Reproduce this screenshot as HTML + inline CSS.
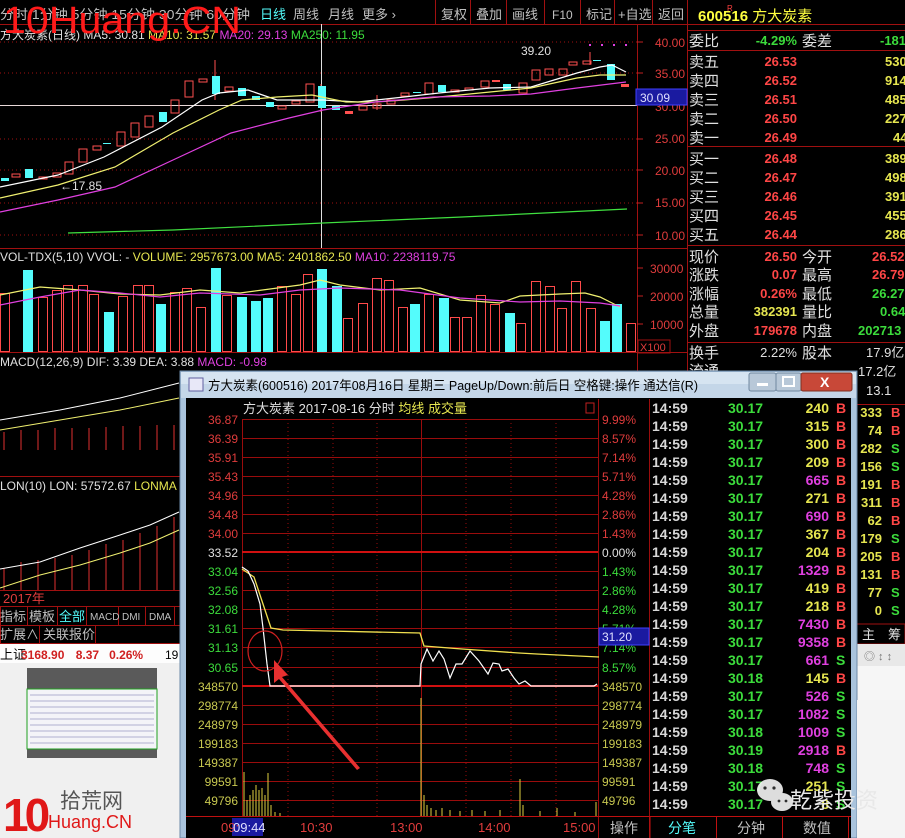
<!DOCTYPE html>
<html><head><meta charset="utf-8">
<style>
html,body{margin:0;padding:0;background:#000;width:905px;height:838px;overflow:hidden}
svg{display:block}
text{font-family:"Liberation Sans","Noto Sans CJK SC",sans-serif}
.r{fill:#ff4646}.g{fill:#3cdc3c}.y{fill:#e6e650}.w{fill:#e0e0e0}.c{fill:#54fcfc}.m{fill:#e040e0}.gr{fill:#c0c0c0}
</style></head><body>
<svg width="905" height="838" viewBox="0 0 905 838" font-size="12" xmlns="http://www.w3.org/2000/svg">
<rect width="905" height="838" fill="#000"/>
<!-- toolbar -->
<line x1="0" y1="24.5" x2="905" y2="24.5" stroke="#a01010"/>
<text x="0" y="19" class="gr" font-size="13" textLength="250" lengthAdjust="spacingAndGlyphs">分时 1分钟 5分钟 15分钟 30分钟 60分钟</text>
<text x="260" y="19" class="c" font-size="13">日线</text>
<text x="293" y="19" class="gr" font-size="13">周线</text>
<text x="328" y="19" class="gr" font-size="13">月线</text>
<text x="362" y="19" class="gr" font-size="13">更多 ›</text>
<text x="441" y="19" class="gr" font-size="13">复权</text>
<text x="476" y="19" class="gr" font-size="13">叠加</text>
<text x="512" y="19" class="gr" font-size="13">画线</text>
<text x="552" y="19" class="gr" font-size="12">F10</text>
<text x="586" y="19" class="gr" font-size="13">标记</text>
<text x="618" y="19" class="gr" font-size="13">+自选</text>
<text x="658" y="19" class="gr" font-size="13">返回</text>
<g stroke="#a01010"><line x1="435.5" y1="0" x2="435.5" y2="24"/><line x1="470.5" y1="0" x2="470.5" y2="24"/><line x1="506.5" y1="0" x2="506.5" y2="24"/><line x1="544.5" y1="0" x2="544.5" y2="24"/><line x1="580.5" y1="0" x2="580.5" y2="24"/><line x1="614.5" y1="0" x2="614.5" y2="24"/><line x1="652.5" y1="0" x2="652.5" y2="24"/><line x1="687.5" y1="0" x2="687.5" y2="838"/><line x1="637.5" y1="24" x2="637.5" y2="372"/></g>
<text x="0" y="39" font-size="12"><tspan class="w">方大炭素(日线) MA5: 30.81 </tspan><tspan class="y">MA10: 31.57 </tspan><tspan class="m"> MA20: 29.13 </tspan><tspan class="g"> MA250: 11.95</tspan></text>
<!-- price axis -->
<g font-size="12" fill="#e03c3c">
<text x="655" y="47">40.00</text><text x="655" y="78">35.00</text><text x="655" y="111">30.00</text><text x="655" y="143">25.00</text><text x="655" y="175">20.00</text><text x="655" y="207">15.00</text><text x="655" y="240">10.00</text></g>
<g stroke="#a01010" stroke-dasharray="1 3"><line x1="0" y1="42" x2="637" y2="42"/><line x1="0" y1="73" x2="637" y2="73"/><line x1="0" y1="139" x2="637" y2="139"/><line x1="0" y1="170" x2="637" y2="170"/><line x1="0" y1="203" x2="637" y2="203"/><line x1="0" y1="235" x2="637" y2="235"/></g>
<g stroke="#c02020"><line x1="637" y1="42" x2="643" y2="42"/><line x1="637" y1="73" x2="643" y2="73"/><line x1="637" y1="139" x2="643" y2="139"/><line x1="637" y1="170" x2="643" y2="170"/><line x1="637" y1="203" x2="643" y2="203"/><line x1="637" y1="235" x2="643" y2="235"/></g>
<line x1="0" y1="105.5" x2="637" y2="105.5" stroke="#e8d8d8"/>
<line x1="321.5" y1="24" x2="321.5" y2="248" stroke="#e0e0e0"/>
<rect x="636" y="89" width="51" height="16" fill="#1a1aa0" stroke="#4040ff"/>
<text x="640" y="102" fill="#e0e0ff" font-size="12">30.09</text>
<!-- candles -->
<g stroke="#ff5050" fill="none" stroke-width="1">
<rect x="12" y="174" width="8" height="3"/><rect x="39" y="177" width="8" height="2"/><rect x="53" y="173" width="8" height="4"/><rect x="65" y="162" width="8" height="12"/><rect x="79" y="149" width="8" height="13"/><rect x="93" y="146" width="8" height="4"/><rect x="117" y="132" width="8" height="14"/><rect x="131" y="123" width="8" height="14"/><rect x="145" y="116" width="8" height="11"/><rect x="171" y="100" width="8" height="13"/><rect x="185" y="81" width="8" height="16"/><rect x="199" y="79" width="8" height="3"/><rect x="225" y="87" width="8" height="4"/><rect x="278" y="106" width="8" height="3"/><rect x="292" y="101" width="8" height="3"/><rect x="306" y="84" width="8" height="18"/><rect x="359" y="106" width="8" height="4"/><rect x="373" y="104" width="8" height="4"/><rect x="387" y="100" width="8" height="4"/><rect x="401" y="93" width="8" height="3"/><rect x="425" y="83" width="8" height="11"/><rect x="451" y="90" width="8" height="2"/><rect x="465" y="88" width="8" height="2"/><rect x="481" y="81" width="8" height="6"/><rect x="519" y="83" width="8" height="10"/><rect x="532" y="70" width="8" height="10"/><rect x="545" y="69" width="8" height="6"/><rect x="559" y="69" width="8" height="6"/><rect x="569" y="62" width="8" height="3"/><rect x="583" y="61" width="8" height="3"/>
<line x1="215" y1="60" x2="215" y2="100"/><line x1="321" y1="84" x2="321" y2="112"/><line x1="377" y1="95" x2="377" y2="110"/><line x1="590" y1="52" x2="590" y2="65"/>
</g>
<g fill="#ff5050"><rect x="345" y="111" width="8" height="3"/><rect x="492" y="80" width="8" height="2"/><rect x="621" y="84" width="8" height="3"/></g>
<g fill="#54fcfc"><rect x="1" y="178" width="8" height="3"/><rect x="25" y="169" width="8" height="9"/><rect x="159" y="112" width="8" height="10"/><rect x="212" y="76" width="8" height="18"/><rect x="238" y="88" width="8" height="8"/><rect x="252" y="96" width="8" height="4"/><rect x="266" y="102" width="8" height="5"/><rect x="318" y="86" width="8" height="22"/><rect x="332" y="106" width="8" height="4"/><rect x="438" y="85" width="8" height="7"/><rect x="503" y="84" width="8" height="6"/><rect x="607" y="64" width="8" height="16"/>
<rect x="103" y="143" width="8" height="1"/><rect x="413" y="92" width="8" height="1"/><rect x="593" y="60" width="8" height="1"/></g>
<g fill="none" stroke-width="1.2">
<polyline stroke="#ffffff" points="0,187 58,175 104,157 162,127 202,100 219,93 248,90 277,100 323,100 358,102 404,97 439,93 490,88 531,87 554,80 577,73 600,67 612,65 626,72"/>
<polyline stroke="#f0f070" points="0,198 58,185 115,167 173,133 219,110 242,100 277,97 312,95 346,102 375,102 404,100 439,97 490,92 531,88 554,83 577,78 600,75 626,75"/>
<polyline stroke="#e040e0" points="0,212 58,200 115,187 173,160 231,133 289,118 323,110 375,102 433,97 490,96 531,94 577,88 626,82"/>
<polyline stroke="#40e040" points="68,233 173,230 323,223 462,217 627,209"/>
</g>
<text x="521" y="55" class="w" font-size="12">39.20</text><text x="60" y="190" class="w" font-size="12">←17.85</text>
<g fill="#e040e0"><rect x="589" y="44" width="2" height="2"/><rect x="601" y="44" width="2" height="2"/><rect x="613" y="44" width="2" height="2"/><rect x="625" y="44" width="2" height="2"/></g>
<!-- right panel top -->
<text x="698" y="21" font-size="15" fill="#ffff40"><tspan font-weight="bold">600516</tspan> 方大炭素</text>
<text x="727" y="11" font-size="8" fill="#ff4040">R</text>
<g stroke="#a01010"><line x1="688" y1="30.5" x2="905" y2="30.5"/><line x1="688" y1="50.5" x2="905" y2="50.5"/><line x1="688" y1="146.5" x2="905" y2="146.5"/><line x1="688" y1="245.5" x2="905" y2="245.5"/><line x1="688" y1="342.5" x2="905" y2="342.5"/></g>
<g font-size="15" class="w">
<text x="689" y="46">委比</text><text x="802" y="46">委差</text>
<text x="689" y="67">卖五</text><text x="689" y="86">卖四</text><text x="689" y="105">卖三</text><text x="689" y="124">卖二</text><text x="689" y="143">卖一</text>
<text x="689" y="164">买一</text><text x="689" y="183">买二</text><text x="689" y="202">买三</text><text x="689" y="221">买四</text><text x="689" y="240">买五</text>
</g>
<g font-size="13" text-anchor="end" font-weight="bold">
<text x="797" y="45" class="g">-4.29%</text>
<text x="797" y="66" class="r">26.53</text><text x="797" y="85" class="r">26.52</text><text x="797" y="104" class="r">26.51</text><text x="797" y="123" class="r">26.50</text><text x="797" y="142" class="r">26.49</text>
<text x="797" y="163" class="r">26.48</text><text x="797" y="182" class="r">26.47</text><text x="797" y="201" class="r">26.46</text><text x="797" y="220" class="r">26.45</text><text x="797" y="239" class="r">26.44</text>
</g>
<text x="880" y="45" class="g" font-size="13" font-weight="bold">-181</text>
<g font-size="13" class="y" font-weight="bold">
<text x="885" y="66">530</text><text x="885" y="85">914</text><text x="885" y="104">485</text><text x="885" y="123">227</text><text x="893" y="142">44</text>
<text x="885" y="163">389</text><text x="885" y="182">498</text><text x="885" y="201">391</text><text x="885" y="220">455</text><text x="885" y="239">286</text>
</g>
<g font-size="15" class="w">
<text x="689" y="262">现价</text><text x="802" y="262">今开</text>
<text x="689" y="280">涨跌</text><text x="802" y="280">最高</text>
<text x="689" y="299">涨幅</text><text x="802" y="299">最低</text>
<text x="689" y="317">总量</text><text x="802" y="317">量比</text>
<text x="689" y="336">外盘</text><text x="802" y="336">内盘</text>
<text x="689" y="358">换手</text><text x="802" y="358">股本</text>
<text x="689" y="376">流通</text>
</g>
<g font-size="13" text-anchor="end" font-weight="bold">
<text x="797" y="261" class="r">26.50</text><text x="797" y="279" class="r">0.07</text><text x="797" y="298" class="r">0.26%</text><text x="797" y="316" class="y">382391</text><text x="797" y="335" class="r">179678</text><text x="797" y="357" class="w" font-weight="normal">2.22%</text>
</g>
<g font-size="13" font-weight="bold">
<text x="872" y="261" class="r">26.52</text><text x="872" y="279" class="r">26.79</text><text x="872" y="298" class="g">26.27</text><text x="880" y="316" class="g">0.64</text><text x="858" y="335" class="g">202713</text><text x="866" y="357" class="w" font-weight="normal">17.9亿</text><text x="858" y="376" class="w" font-weight="normal">17.2亿</text><text x="866" y="395" class="w" font-weight="normal">13.1</text>
</g>
<!-- volume panel -->
<line x1="0" y1="248.5" x2="688" y2="248.5" stroke="#a01010"/>
<text x="0" y="261" font-size="12"><tspan class="w">VOL-TDX(5,10) VVOL: - </tspan><tspan class="y"> VOLUME: 2957673.00 MA5: 2401862.50 </tspan><tspan class="m"> MA10: 2238119.75</tspan></text>
<g font-size="12" fill="#e03c3c"><text x="650" y="273">30000</text><text x="650" y="301">20000</text><text x="650" y="329">10000</text></g>
<rect x="638" y="340" width="32" height="13" fill="none" stroke="#a01010"/><text x="640" y="351" font-size="11" fill="#e03c3c">X100</text>
<g stroke="#c02020"><line x1="637" y1="268" x2="643" y2="268"/><line x1="637" y1="296" x2="643" y2="296"/><line x1="637" y1="324" x2="643" y2="324"/></g>
<g stroke="#ff4a4a" fill="none">
<rect x="0.5" y="293.5" width="9" height="58"/><rect x="38.5" y="297.5" width="9" height="54"/><rect x="52.5" y="290.5" width="9" height="61"/><rect x="63.5" y="285.5" width="9" height="66"/><rect x="78.5" y="285.5" width="9" height="66"/><rect x="89.5" y="294.5" width="9" height="57"/><rect x="118.5" y="296.5" width="9" height="55"/><rect x="133.5" y="285.5" width="9" height="66"/><rect x="144.5" y="285.5" width="9" height="66"/><rect x="170.5" y="292.5" width="9" height="59"/><rect x="182.5" y="288.5" width="9" height="63"/><rect x="196.5" y="307.5" width="9" height="44"/><rect x="222.5" y="295.5" width="9" height="56"/><rect x="277.5" y="286.5" width="9" height="65"/><rect x="291.5" y="294.5" width="9" height="57"/><rect x="303.5" y="274.5" width="9" height="77"/><rect x="343.5" y="318.5" width="9" height="33"/><rect x="358.5" y="303.5" width="9" height="48"/><rect x="372.5" y="278.5" width="9" height="73"/><rect x="384.5" y="280.5" width="9" height="71"/><rect x="398.5" y="307.5" width="9" height="44"/><rect x="424.5" y="294.5" width="9" height="57"/><rect x="450.5" y="317.5" width="9" height="34"/><rect x="462.5" y="317.5" width="9" height="34"/><rect x="476.5" y="295.5" width="9" height="56"/><rect x="490.5" y="304.5" width="9" height="47"/><rect x="516.5" y="323.5" width="9" height="28"/><rect x="531.5" y="281.5" width="9" height="70"/><rect x="545.5" y="286.5" width="9" height="65"/><rect x="557.5" y="308.5" width="9" height="43"/><rect x="571.5" y="281.5" width="9" height="70"/><rect x="586.5" y="308.5" width="9" height="43"/><rect x="626.5" y="323.5" width="9" height="28"/>
</g>
<g fill="#54fcfc"><rect x="23" y="270" width="10" height="82"/><rect x="104" y="312" width="10" height="40"/><rect x="156" y="304" width="10" height="48"/><rect x="211" y="268" width="10" height="84"/><rect x="237" y="297" width="10" height="55"/><rect x="251" y="301" width="10" height="51"/><rect x="263" y="298" width="10" height="54"/><rect x="317" y="269" width="10" height="83"/><rect x="332" y="286" width="10" height="66"/><rect x="410" y="304" width="10" height="48"/><rect x="439" y="298" width="10" height="54"/><rect x="505" y="313" width="10" height="39"/><rect x="600" y="321" width="10" height="31"/><rect x="612" y="304" width="10" height="48"/></g>
<g fill="none" stroke-width="1.2">
<polyline stroke="#f0f070" points="0,295 40,287 80,290 120,294 160,295 200,290 240,293 300,285 320,280 340,285 380,290 420,288 460,300 500,303 520,296 560,294 585,293 600,297 620,307"/>
<polyline stroke="#e040e0" points="0,305 40,297 80,290 120,293 160,297 200,293 260,295 300,290 340,288 400,290 460,298 520,302 560,301 600,303 620,306"/>
</g>
<line x1="0" y1="352.5" x2="688" y2="352.5" stroke="#a01010"/>
<text x="0" y="366" font-size="12"><tspan class="w">MACD(12,26,9) DIF: 3.39 DEA: 3.88 </tspan><tspan class="m"> MACD: -0.98</tspan></text>
<!-- macd / lon remnants left -->
<g stroke="#e03030"><line x1="4" y1="432" x2="4" y2="450"/><line x1="21" y1="430" x2="21" y2="450"/><line x1="38" y1="430" x2="38" y2="450"/><line x1="55" y1="428" x2="55" y2="450"/><line x1="72" y1="428" x2="72" y2="450"/><line x1="89" y1="428" x2="89" y2="450"/><line x1="106" y1="427" x2="106" y2="450"/><line x1="123" y1="426" x2="123" y2="450"/><line x1="140" y1="426" x2="140" y2="450"/><line x1="157" y1="425" x2="157" y2="450"/><line x1="174" y1="425" x2="174" y2="450"/>
<line x1="4" y1="568" x2="4" y2="590"/><line x1="21" y1="562" x2="21" y2="590"/><line x1="38" y1="560" x2="38" y2="590"/><line x1="55" y1="558" x2="55" y2="590"/><line x1="72" y1="555" x2="72" y2="590"/><line x1="89" y1="550" x2="89" y2="590"/><line x1="106" y1="544" x2="106" y2="590"/><line x1="123" y1="540" x2="123" y2="590"/><line x1="140" y1="533" x2="140" y2="590"/><line x1="157" y1="526" x2="157" y2="590"/><line x1="174" y1="517" x2="174" y2="590"/></g>
<polyline fill="none" stroke="#fff" points="0,420 60,410 120,398 179,383"/>
<polyline fill="none" stroke="#f0f070" points="0,430 60,420 120,410 179,398"/>
<line x1="0" y1="476.5" x2="181" y2="476.5" stroke="#a01010"/>
<text x="0" y="490" font-size="12"><tspan class="w">LON(10) LON: 57572.67 </tspan><tspan class="y">LONMA</tspan></text>
<polyline fill="none" stroke="#fff" points="0,569 40,562 80,548 120,535 150,525 179,512"/>
<polyline fill="none" stroke="#f0f070" points="0,588 40,575 80,565 120,553 150,543 179,530"/>
<line x1="0" y1="590.5" x2="181" y2="590.5" stroke="#a01010"/>
<text x="3" y="603" font-size="13" fill="#e03c3c">2017年</text>
<g stroke="#a01010" fill="none"><rect x="0.5" y="606.5" width="181" height="19"/><rect x="0.5" y="625.5" width="181" height="18"/>
<line x1="27.5" y1="606" x2="27.5" y2="626"/><line x1="57.5" y1="606" x2="57.5" y2="626"/><line x1="86.5" y1="606" x2="86.5" y2="626"/><line x1="118.5" y1="606" x2="118.5" y2="626"/><line x1="145.5" y1="606" x2="145.5" y2="626"/><line x1="174.5" y1="606" x2="174.5" y2="626"/><line x1="39.5" y1="626" x2="39.5" y2="644"/><line x1="95.5" y1="626" x2="95.5" y2="644"/></g>
<text x="0" y="621" font-size="13" class="gr">指标</text><text x="29" y="621" font-size="13" class="gr">模板</text><text x="59" y="621" font-size="13" class="c">全部</text>
<text x="90" y="620" font-size="10" class="gr">MACD</text><text x="122" y="620" font-size="10" class="gr">DMI</text><text x="149" y="620" font-size="10" class="gr">DMA</text>
<text x="0" y="639" font-size="13" class="gr">扩展∧</text><text x="43" y="639" font-size="13" class="gr">关联报价</text>
<rect x="0" y="644" width="181" height="19" fill="#fdfdfd"/>
<text x="0" y="659" font-size="13" fill="#000">上证</text><text x="21" y="659" font-size="12" font-weight="bold" fill="#d02020">3168.90 <tspan dx="8">8.37</tspan><tspan dx="10">0.26%</tspan></text><text x="165" y="659" font-size="12" fill="#000">19</text>
<rect x="0" y="663" width="181" height="175" fill="#f0f0f0"/>
<rect x="27" y="668" width="130" height="90" fill="#5a5a5a"/>
<rect x="27" y="689" width="130" height="60" fill="#f4f4f8" stroke="#20a020"/>
<g stroke="#b0b0d0"><line x1="30" y1="695" x2="154" y2="695"/><line x1="30" y1="701" x2="154" y2="701"/><line x1="30" y1="707" x2="154" y2="707"/><line x1="30" y1="713" x2="154" y2="713"/><line x1="30" y1="719" x2="154" y2="719"/><line x1="30" y1="725" x2="154" y2="725"/><line x1="30" y1="731" x2="154" y2="731"/><line x1="30" y1="737" x2="154" y2="737"/><line x1="30" y1="743" x2="154" y2="743"/></g>
<text x="3" y="831" font-size="46" font-weight="bold" fill="#e01818" letter-spacing="-4">10</text>
<text x="60" y="808" font-size="21" fill="#555">拾荒网</text>
<text x="48" y="828" font-size="18" fill="#e01818">Huang.CN</text>
<!-- right strip under popup -->
<g font-size="13" font-weight="bold" text-anchor="end">
<text x="882" y="417" class="y">333</text><text x="882" y="435" class="y">74</text><text x="882" y="453" class="y">282</text><text x="882" y="471" class="y">156</text><text x="882" y="489" class="y">191</text><text x="882" y="507" class="y">311</text><text x="882" y="525" class="y">62</text><text x="882" y="543" class="y">179</text><text x="882" y="561" class="y">205</text><text x="882" y="579" class="y">131</text><text x="882" y="597" class="y">77</text><text x="882" y="615" class="y">0</text>
</g>
<g font-size="13" font-weight="bold"><text x="891" y="417" class="r">B</text><text x="891" y="435" class="r">B</text><text x="891" y="453" class="g">S</text><text x="891" y="471" class="g">S</text><text x="891" y="489" class="r">B</text><text x="891" y="507" class="r">B</text><text x="891" y="525" class="r">B</text><text x="891" y="543" class="g">S</text><text x="891" y="561" class="r">B</text><text x="891" y="579" class="r">B</text><text x="891" y="597" class="g">S</text><text x="891" y="615" class="g">S</text></g>
<line x1="853" y1="404.5" x2="905" y2="404.5" stroke="#a01010"/>
<rect x="853" y="624" width="52" height="20" fill="#000" stroke="#a01010"/>
<text x="862" y="639" font-size="13" class="w">主</text><text x="888" y="639" font-size="13" class="w">筹</text>
<rect x="853" y="644" width="52" height="22" fill="#e8e8e8"/>
<text x="864" y="660" font-size="11" fill="#777">◎ ↕ ↕</text>
<rect x="853" y="666" width="52" height="172" fill="#f6f6f6"/>
<!-- popup window -->
<rect x="180" y="371" width="677" height="467" fill="#a9c3dc" stroke="#6d8aa8"/>
<rect x="181" y="372" width="675" height="26" fill="#c4d6e8"/>
<rect x="181" y="372" width="675" height="12" fill="#d6e4f1"/>
<rect x="189" y="378" width="14" height="13" fill="#e8e8f8" stroke="#6060a0"/>
<text x="208" y="390" font-size="13" fill="#000" textLength="490" lengthAdjust="spacingAndGlyphs">方大炭素(600516) 2017年08月16日 星期三 PageUp/Down:前后日 空格键:操作 通达信(R)</text>
<rect x="749" y="373" width="27" height="18" rx="2" fill="#b8c8d8" stroke="#7088a0"/>
<rect x="757" y="383" width="11" height="3" fill="#fff"/>
<rect x="776" y="373" width="25" height="18" rx="2" fill="#b8c8d8" stroke="#7088a0"/>
<rect x="783" y="377" width="11" height="9" fill="none" stroke="#fff" stroke-width="2"/>
<rect x="801" y="373" width="51" height="18" rx="2" fill="#c84838" stroke="#803020"/>
<text x="820" y="387" font-size="14" font-weight="bold" fill="#fff">X</text>
<rect x="186" y="398" width="665" height="440" fill="#000"/>
<!-- popup chart -->
<text x="243" y="413" font-size="13"><tspan class="w">方大炭素  2017-08-16 分时 </tspan><tspan class="y">均线 成交量</tspan></text>
<rect x="586" y="403" width="8" height="10" fill="none" stroke="#c02020"/>
<g stroke="#9a0c0c">
<line x1="242" y1="419.5" x2="598" y2="419.5"/><line x1="242" y1="438.5" x2="598" y2="438.5"/><line x1="242" y1="457.5" x2="598" y2="457.5"/><line x1="242" y1="476.5" x2="598" y2="476.5"/><line x1="242" y1="495.5" x2="598" y2="495.5"/><line x1="242" y1="514.5" x2="598" y2="514.5"/><line x1="242" y1="533.5" x2="598" y2="533.5"/>
<line x1="242" y1="571.5" x2="598" y2="571.5"/><line x1="242" y1="590.5" x2="598" y2="590.5"/><line x1="242" y1="609.5" x2="598" y2="609.5"/><line x1="242" y1="628.5" x2="598" y2="628.5"/><line x1="242" y1="647.5" x2="598" y2="647.5"/><line x1="242" y1="667.5" x2="598" y2="667.5"/>
<line x1="242" y1="705.5" x2="598" y2="705.5"/><line x1="242" y1="724.5" x2="598" y2="724.5"/><line x1="242" y1="743.5" x2="598" y2="743.5"/><line x1="242" y1="762.5" x2="598" y2="762.5"/><line x1="242" y1="781.5" x2="598" y2="781.5"/><line x1="242" y1="800.5" x2="598" y2="800.5"/>
<line x1="242.5" y1="419" x2="242.5" y2="816"/><line x1="421.5" y1="419" x2="421.5" y2="816"/><line x1="598.5" y1="399" x2="598.5" y2="838"/><line x1="649.5" y1="399" x2="649.5" y2="838"/>
</g>
<g stroke="#d01010" stroke-width="2"><line x1="242" y1="552" x2="598" y2="552"/><line x1="242" y1="686" x2="598" y2="686"/></g>
<g stroke="#9a0c0c" stroke-dasharray="1 3"><line x1="288" y1="419" x2="288" y2="816"/><line x1="333" y1="419" x2="333" y2="816"/><line x1="377" y1="419" x2="377" y2="816"/><line x1="466" y1="419" x2="466" y2="816"/><line x1="511" y1="419" x2="511" y2="816"/><line x1="556" y1="419" x2="556" y2="816"/></g>
<g font-size="12" text-anchor="end">
<text x="238" y="424" fill="#e03c3c">36.87</text><text x="238" y="443" fill="#e03c3c">36.39</text><text x="238" y="462" fill="#e03c3c">35.91</text><text x="238" y="481" fill="#e03c3c">35.43</text><text x="238" y="500" fill="#e03c3c">34.96</text><text x="238" y="519" fill="#e03c3c">34.48</text><text x="238" y="538" fill="#e03c3c">34.00</text>
<text x="238" y="557" class="w">33.52</text>
<text x="238" y="576" class="g">33.04</text><text x="238" y="595" class="g">32.56</text><text x="238" y="614" class="g">32.08</text><text x="238" y="633" class="g">31.61</text><text x="238" y="652" class="g">31.13</text><text x="238" y="672" class="g">30.65</text>
<text x="238" y="691" fill="#c8c850">348570</text><text x="238" y="710" fill="#c8c850">298774</text><text x="238" y="729" fill="#c8c850">248979</text><text x="238" y="748" fill="#c8c850">199183</text><text x="238" y="767" fill="#c8c850">149387</text><text x="238" y="786" fill="#c8c850">99591</text><text x="238" y="805" fill="#c8c850">49796</text>
</g>
<g font-size="12">
<text x="602" y="424" fill="#e03c3c">9.99%</text><text x="602" y="443" fill="#e03c3c">8.57%</text><text x="602" y="462" fill="#e03c3c">7.14%</text><text x="602" y="481" fill="#e03c3c">5.71%</text><text x="602" y="500" fill="#e03c3c">4.28%</text><text x="602" y="519" fill="#e03c3c">2.86%</text><text x="602" y="538" fill="#e03c3c">1.43%</text>
<text x="602" y="557" class="w">0.00%</text>
<text x="602" y="576" class="g">1.43%</text><text x="602" y="595" class="g">2.86%</text><text x="602" y="614" class="g">4.28%</text><text x="602" y="633" class="g">5.71%</text><text x="602" y="652" class="g">7.14%</text><text x="602" y="672" class="g">8.57%</text>
<text x="602" y="691" fill="#c8c850">348570</text><text x="602" y="710" fill="#c8c850">298774</text><text x="602" y="729" fill="#c8c850">248979</text><text x="602" y="748" fill="#c8c850">199183</text><text x="602" y="767" fill="#c8c850">149387</text><text x="602" y="786" fill="#c8c850">99591</text><text x="602" y="805" fill="#c8c850">49796</text>
</g>
<rect x="599" y="628" width="50" height="17" fill="#1a1aa0" stroke="#4040ff"/>
<text x="602" y="641" font-size="12" fill="#e0e0ff">31.20</text>
<polyline fill="none" stroke="#f0e050" stroke-width="1.3" points="242,569 254,577 263,604 271,628 283,630 420,633 424,646 462,649 519,653 537,654 599,657"/>
<polyline fill="none" stroke="#fff" stroke-width="1.2" points="242,567 248,571 254,584 260,604 263,628 267,664 270,686 420,686 421,664 427,649 433,661 439,651 444,659 450,678 456,664 462,664 470,651 479,661 488,674 493,663 499,664 502,671 508,669 514,678 519,684 525,681 531,686 594,686 597,684"/>
<g stroke="#e0d040">
<line x1="244" y1="816" x2="244" y2="772"/><line x1="247" y1="816" x2="247" y2="800"/><line x1="250" y1="816" x2="250" y2="795"/><line x1="253" y1="816" x2="253" y2="790"/><line x1="256" y1="816" x2="256" y2="785"/><line x1="259" y1="816" x2="259" y2="790"/><line x1="262" y1="816" x2="262" y2="788"/><line x1="265" y1="816" x2="265" y2="795"/><line x1="268" y1="816" x2="268" y2="773"/><line x1="271" y1="816" x2="271" y2="805"/><line x1="275" y1="816" x2="275" y2="812"/><line x1="280" y1="816" x2="280" y2="813"/>
<line x1="421" y1="816" x2="421" y2="698"/><line x1="424" y1="816" x2="424" y2="795"/><line x1="427" y1="816" x2="427" y2="805"/><line x1="431" y1="816" x2="431" y2="808"/><line x1="436" y1="816" x2="436" y2="810"/><line x1="442" y1="816" x2="442" y2="808"/><line x1="450" y1="816" x2="450" y2="810"/><line x1="460" y1="816" x2="460" y2="811"/><line x1="472" y1="816" x2="472" y2="810"/><line x1="485" y1="816" x2="485" y2="811"/><line x1="500" y1="816" x2="500" y2="810"/><line x1="520" y1="816" x2="520" y2="779"/><line x1="523" y1="816" x2="523" y2="805"/><line x1="540" y1="816" x2="540" y2="811"/><line x1="557" y1="816" x2="557" y2="808"/><line x1="575" y1="816" x2="575" y2="812"/><line x1="596" y1="816" x2="596" y2="802"/>
</g>
<ellipse cx="265" cy="651" rx="17" ry="20" fill="none" stroke="#d02020" stroke-width="1.2"/>
<polygon points="274,660 288,675 282,677 360,768 357,770 279,679 274,683" fill="#e83030"/>
<!-- time axis -->
<line x1="186" y1="816.5" x2="851" y2="816.5" stroke="#c01010"/>
<rect x="232" y="818" width="31" height="18" fill="#1a1aa0"/>
<g font-size="13" fill="#e03c3c"><text x="221" y="832">09:</text><text x="233" y="832" fill="#e0e0ff">09:44</text><text x="300" y="832">10:30</text><text x="390" y="832">13:00</text><text x="478" y="832">14:00</text><text x="563" y="832">15:00</text></g>
<g stroke="#c01010"><line x1="650" y1="817" x2="650" y2="838"/><line x1="716.5" y1="817" x2="716.5" y2="838"/><line x1="782.5" y1="817" x2="782.5" y2="838"/><line x1="848.5" y1="817" x2="848.5" y2="838"/></g>
<text x="610" y="833" font-size="14" class="gr">操作</text><text x="668" y="833" font-size="14" class="c">分笔</text><text x="737" y="833" font-size="14" class="gr">分钟</text><text x="803" y="833" font-size="14" class="gr">数值</text>
<!-- ticks -->
<g font-size="14" font-weight="bold">
<g fill="#d8d8d8">
<text x="652" y="413">14:59</text><text x="652" y="431">14:59</text><text x="652" y="449">14:59</text><text x="652" y="467">14:59</text><text x="652" y="485">14:59</text><text x="652" y="503">14:59</text><text x="652" y="521">14:59</text><text x="652" y="539">14:59</text><text x="652" y="557">14:59</text><text x="652" y="575">14:59</text><text x="652" y="593">14:59</text><text x="652" y="611">14:59</text><text x="652" y="629">14:59</text><text x="652" y="647">14:59</text><text x="652" y="665">14:59</text><text x="652" y="683">14:59</text><text x="652" y="701">14:59</text><text x="652" y="719">14:59</text><text x="652" y="737">14:59</text><text x="652" y="755">14:59</text><text x="652" y="773">14:59</text><text x="652" y="791">14:59</text><text x="652" y="809">14:59</text>
</g>
<g class="g">
<text x="728" y="413">30.17</text><text x="728" y="431">30.17</text><text x="728" y="449">30.17</text><text x="728" y="467">30.17</text><text x="728" y="485">30.17</text><text x="728" y="503">30.17</text><text x="728" y="521">30.17</text><text x="728" y="539">30.17</text><text x="728" y="557">30.17</text><text x="728" y="575">30.17</text><text x="728" y="593">30.17</text><text x="728" y="611">30.17</text><text x="728" y="629">30.17</text><text x="728" y="647">30.17</text><text x="728" y="665">30.17</text><text x="728" y="683">30.18</text><text x="728" y="701">30.17</text><text x="728" y="719">30.17</text><text x="728" y="737">30.18</text><text x="728" y="755">30.19</text><text x="728" y="773">30.18</text><text x="728" y="791">30.17</text><text x="728" y="809">30.17</text>
</g>
<g text-anchor="end">
<text x="829" y="413" class="y">240</text><text x="829" y="431" class="y">315</text><text x="829" y="449" class="y">300</text><text x="829" y="467" class="y">209</text><text x="829" y="485" class="m">665</text><text x="829" y="503" class="y">271</text><text x="829" y="521" class="m">690</text><text x="829" y="539" class="y">367</text><text x="829" y="557" class="y">204</text><text x="829" y="575" class="m">1329</text><text x="829" y="593" class="y">419</text><text x="829" y="611" class="y">218</text><text x="829" y="629" class="m">7430</text><text x="829" y="647" class="m">9358</text><text x="829" y="665" class="m">661</text><text x="829" y="683" class="y">145</text><text x="829" y="701" class="m">526</text><text x="829" y="719" class="m">1082</text><text x="829" y="737" class="m">1009</text><text x="829" y="755" class="m">2918</text><text x="829" y="773" class="m">748</text><text x="829" y="791" class="y">251</text><text x="829" y="809" class="y">8</text>
</g>
<g>
<text x="836" y="413" class="r">B</text><text x="836" y="431" class="r">B</text><text x="836" y="449" class="r">B</text><text x="836" y="467" class="r">B</text><text x="836" y="485" class="r">B</text><text x="836" y="503" class="r">B</text><text x="836" y="521" class="r">B</text><text x="836" y="539" class="r">B</text><text x="836" y="557" class="r">B</text><text x="836" y="575" class="r">B</text><text x="836" y="593" class="r">B</text><text x="836" y="611" class="r">B</text><text x="836" y="629" class="r">B</text><text x="836" y="647" class="r">B</text><text x="836" y="665" class="g">S</text><text x="836" y="683" class="r">B</text><text x="836" y="701" class="g">S</text><text x="836" y="719" class="g">S</text><text x="836" y="737" class="g">S</text><text x="836" y="755" class="r">B</text><text x="836" y="773" class="g">S</text><text x="836" y="791" class="g">S</text><text x="836" y="809" class="g">S</text>
</g>
</g>
<rect x="857" y="700" width="48" height="138" fill="#f4f4f4"/>
<!-- wechat watermark -->
<g opacity="0.92">
<ellipse cx="770" cy="790" rx="13" ry="11" fill="#f0f0f0"/>
<ellipse cx="782" cy="802" rx="11" ry="9" fill="#f0f0f0"/>
<circle cx="765" cy="788" r="1.6" fill="#333"/><circle cx="774" cy="788" r="1.6" fill="#333"/><circle cx="779" cy="801" r="1.4" fill="#333"/><circle cx="786" cy="801" r="1.4" fill="#333"/>
</g>
<text x="790" y="808" font-size="22" fill="#e8e8e8">乾紫投资</text>
<!-- big watermark -->
<text x="3" y="33" font-size="38" fill="#ff1a1a" textLength="238" lengthAdjust="spacingAndGlyphs">10Huang.CN</text>
</svg>
</body></html>
